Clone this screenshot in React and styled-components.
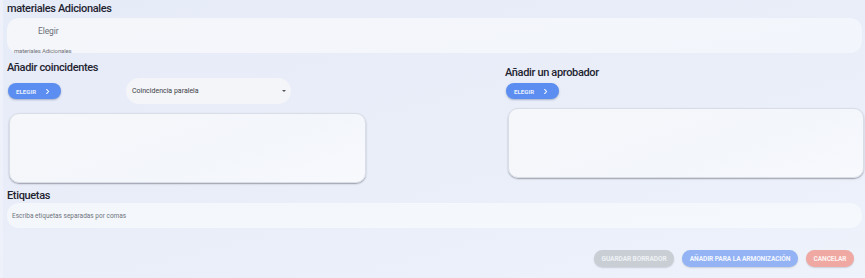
import React from "react";
import styled, { createGlobalStyle } from "styled-components";

const Global = createGlobalStyle`
  html, body {
    margin: 0;
    padding: 0;
  }
  body {
    font-family: Roboto, "Liberation Sans", sans-serif;
    background: #e8edf9;
  }
`;

const Page = styled.div`
  width: 865px;
  height: 278px;
  box-sizing: border-box;
  padding: 2px 1px 0 4px;
  background: linear-gradient(165deg, #e6ebf8 0%, #e9eef9 55%, #eef2fb 100%);
  border-left: 3px solid #eef1f9;
  overflow: hidden;
`;

const Title = styled.div`
  font-size: 11px;
  font-weight: 500;
  color: #1f2430;
  letter-spacing: -0.35px;
  line-height: 14px;
  height: 14px;
  margin-left: ${(p) => p.$indent || 0}px;
`;

const MaterialBox = styled.div`
  margin-top: 2px;
  width: 855px;
  height: 35px;
  box-sizing: border-box;
  border-radius: 12px;
  background: linear-gradient(170deg, #f5f6fa, #f2f6fc);
  position: relative;
  padding: 8px 0 0 31px;
`;

const Choose = styled.div`
  font-size: 8.5px;
  color: #6c7077;
  letter-spacing: -0.1px;
`;

const Caption = styled.div`
  position: absolute;
  left: 7px;
  bottom: -1px;
  font-size: 6px;
  color: #6f737a;
  letter-spacing: -0.15px;
`;

const Columns = styled.div`
  display: flex;
  margin-top: 8px;
`;

const LeftCol = styled.div`
  width: 498px;
  display: flex;
  flex-direction: column;
`;

const RightCol = styled.div`
  flex: 1;
  display: flex;
  flex-direction: column;
  padding-top: 5px;
`;

const Row = styled.div`
  display: flex;
  align-items: center;
  height: 28px;
  margin-top: 2px;
`;

const ChooseBtn = styled.button`
  display: flex;
  align-items: center;
  gap: 8px;
  width: 53px;
  height: 16px;
  border: none;
  border-radius: 9px;
  background: #5b8ef0;
  color: #e8eeff;
  font-family: Roboto, "Liberation Sans", sans-serif;
  font-size: 6px;
  font-weight: 700;
  letter-spacing: 0.1px;
  padding: 0 0 0 8px;
  margin-left: ${(p) => p.$indent || 0}px;
  margin-top: ${(p) => p.$top || 0}px;
  box-shadow: 0 1px 2px rgba(40, 60, 110, 0.35);
  svg {
    width: 7px;
    height: 7px;
  }
`;

const Select = styled.div`
  margin-left: 65px;
  width: 165px;
  height: 26px;
  box-sizing: border-box;
  border-radius: 13px;
  background: #f4f5f9;
  display: flex;
  align-items: center;
  justify-content: space-between;
  padding: 0 5px 0 6px;
  font-size: 7px;
  color: #3b3f46;
`;

const Caret = styled.span`
  width: 0;
  height: 0;
  border-left: 2px solid transparent;
  border-right: 2px solid transparent;
  border-top: 2px solid #555;
`;

const Area = styled.div`
  width: ${(p) => p.$w}px;
  height: 70px;
  box-sizing: border-box;
  margin-left: ${(p) => p.$indent || 0}px;
  margin-top: ${(p) => p.$top || 0}px;
  border-radius: 10px;
  border: 1px solid #d9dde6;
  background: linear-gradient(160deg, #f6f7fa, #f3f6fb 60%, #f7f9fd);
  box-shadow: 0 1px 1.5px rgba(60, 60, 70, 0.45);
`;

const TagsTitle = styled(Title)`
  margin-top: 6px;
`;

const TagsInput = styled.div`
  width: 855px;
  height: 25px;
  box-sizing: border-box;
  border-radius: 12px;
  background: linear-gradient(175deg, #f3f6fb, #f5f8fd);
  display: flex;
  align-items: center;
  padding-left: 5px;
  font-size: 6.5px;
  color: #6f737b;
`;

const Footer = styled.div`
  display: flex;
  justify-content: flex-end;
  gap: 8px;
  margin-top: 22px;
  padding-right: 10px;
`;

const ActionBtn = styled.button`
  height: 17px;
  width: ${(p) => p.$w}px;
  border: none;
  border-radius: 9px;
  background: ${(p) => p.$bg};
  color: ${(p) => p.$fg};
  font-family: Roboto, "Liberation Sans", sans-serif;
  font-size: 6.6px;
  font-weight: 700;
  letter-spacing: -0.1px;
  padding: 0;
  box-shadow: 0 1px 1.5px rgba(60, 70, 90, 0.2);
`;

const Chevron = () => (
  <svg viewBox="0 0 24 24" fill="none" stroke="#fff" strokeWidth="3.5" strokeLinecap="round" strokeLinejoin="round">
    <path d="M9 5l7 7-7 7" />
  </svg>
);

export default function App() {
  return (
    <>
      <Global />
      <Page>
        <Title>materiales Adicionales</Title>
        <MaterialBox>
          <Choose>Elegir</Choose>
          <Caption>materiales Adicionales</Caption>
        </MaterialBox>
        <Columns>
          <LeftCol>
            <Title>Añadir coincidentes</Title>
            <Row>
              <ChooseBtn $indent={1}>
                ELEGIR <Chevron />
              </ChooseBtn>
              <Select>
                <span>Coincidencia paralela</span>
                <Caret />
              </Select>
            </Row>
            <Area $w={357} $indent={2} $top={8} />
          </LeftCol>
          <RightCol>
            <Title>Añadir un aprobador</Title>
            <ChooseBtn $indent={1} $top={3}>
              ELEGIR <Chevron />
            </ChooseBtn>
            <Area $w={356} $indent={3} $top={9} />
          </RightCol>
        </Columns>
        <TagsTitle>Etiquetas</TagsTitle>
        <TagsInput>Escriba etiquetas separadas por comas</TagsInput>
        <Footer>
          <ActionBtn $w={80} $bg="#c9ced5" $fg="#eef1f4">GUARDAR BORRADOR</ActionBtn>
          <ActionBtn $w={116} $bg="#93b3f5" $fg="#f4f7ff">AÑADIR PARA LA ARMONIZACIÓN</ActionBtn>
          <ActionBtn $w={48} $bg="#f0a8a2" $fg="#fff4f2">CANCELAR</ActionBtn>
        </Footer>
      </Page>
    </>
  );
}
